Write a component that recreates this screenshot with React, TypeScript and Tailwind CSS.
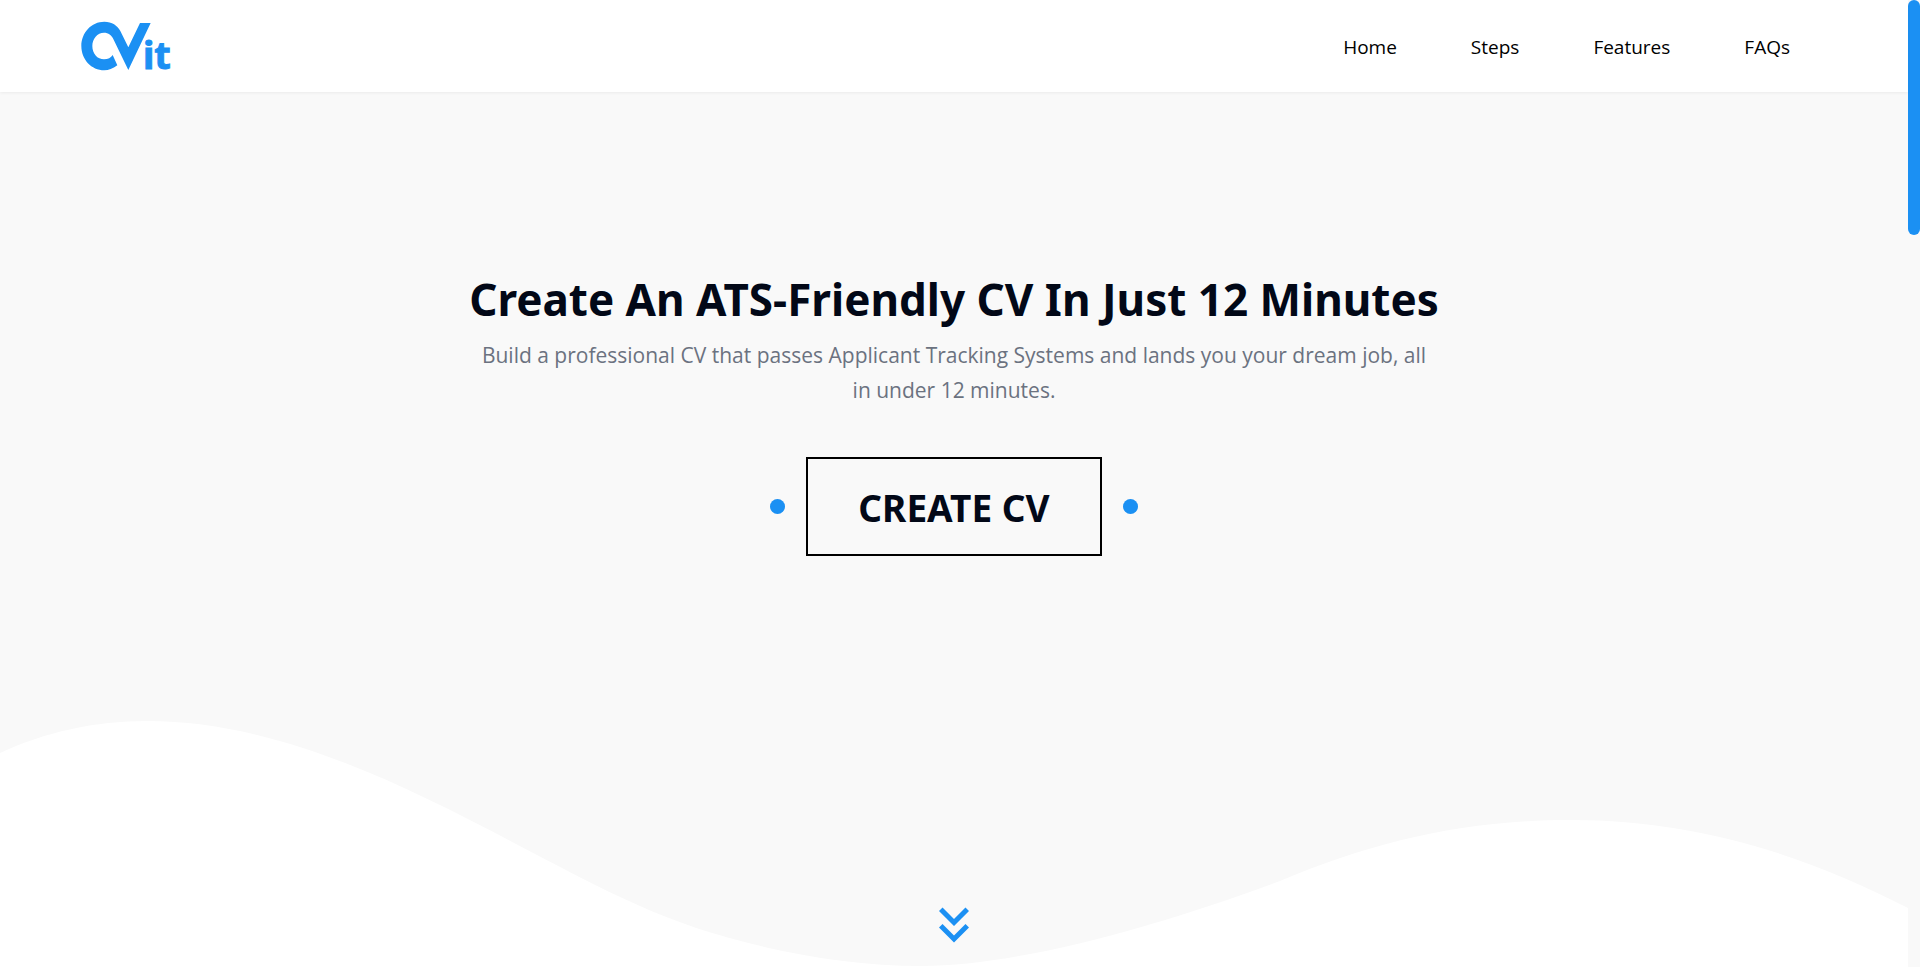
import { MdKeyboardDoubleArrowDown } from "react-icons/md";

const links = [
  { label: "Home", href: "#home" },
  { label: "Steps", href: "#steps" },
  { label: "Features", href: "#features" },
  { label: "FAQs", href: "#faqs" },
];

function Logo() {
  return (
    <svg viewBox="60 0 300 276" className="h-[92px] w-[100px]" fill="#1b90f3" role="img" aria-label="CVit">
      <path d="M172 196C158 206 146 211 133 211C94 211 64 178 64 138C64 98 94 65 133 65C156 65 172 76 181 93L205 142L240 69H272L205 210L161 119C155 105 145 98 132 98C112 98 97 116 97 138C97 161 112 178 132 178C144 178 153 173 158 165Z" />
      <text
        x="249"
        y="206"
        fontSize="114"
        fontWeight="700"
        fontFamily="'Noto Sans', sans-serif"
        stroke="#1b90f3"
        strokeWidth="3"
      >
        it
      </text>
    </svg>
  );
}

function Header() {
  return (
    <header className="z-10 flex h-[92px] items-center justify-between bg-white px-20 shadow-[0_1px_3px_rgba(0,0,0,0.06)]">
      <a href="#home">
        <Logo />
      </a>
      <nav className="flex gap-[74px] pt-0.5 pr-[38px] text-[19px] leading-7 text-black">
        {links.map((link) => (
          <a key={link.label} href={link.href}>
            {link.label}
          </a>
        ))}
      </nav>
    </header>
  );
}

function Wave() {
  return (
    <svg
      viewBox="0 0 1908 247"
      preserveAspectRatio="none"
      className="absolute inset-x-0 bottom-0 h-[247px] w-full"
      fill="#ffffff"
      aria-hidden="true"
    >
      <path d="M0 33C45 12 95 1 147 1C330 1 505 127 640 186C710 218 820 246 922 246C1020 246 1165 204 1280 161C1375 121 1465 100 1572 100C1690 100 1800 132 1908 188V247H0Z" />
    </svg>
  );
}

function Hero() {
  return (
    <main id="home" className="relative flex flex-1 flex-col items-center bg-[#f9f9f9] pt-[175px] pb-3">
      <Wave />
      <div className="relative flex w-full flex-1 flex-col items-center text-center">
        <h1 className="font-['Noto_Sans',sans-serif] text-[44px] leading-[64px] font-bold text-[#020817]">
          Create An ATS-Friendly CV In Just 12 Minutes
        </h1>
        <p className="mt-[7px] max-w-[960px] text-[21px] leading-[35px] text-[#6b7280]">
          Build a professional CV that passes Applicant Tracking Systems and lands you your dream job, all in under 12
          minutes.
        </p>
        <div className="mt-[49px] flex items-center gap-[21px]">
          <span className="size-[15px] rounded-full bg-[#1b90f3]" />
          <button
            type="button"
            className="border-2 border-black px-[50px] pt-[21px] pb-[19px] font-['Noto_Sans',sans-serif] text-[37px] leading-[55px] font-bold text-[#020817]"
          >
            CREATE CV
          </button>
          <span className="size-[15px] rounded-full bg-[#1b90f3]" />
        </div>
        <a href="#steps" aria-label="Scroll to steps" className="mt-auto text-[#1b90f3]">
          <MdKeyboardDoubleArrowDown className="size-[60px]" />
        </a>
      </div>
    </main>
  );
}

export default function App() {
  return (
    <div className="flex min-h-screen bg-[#f9f9f9] font-['Open_Sans','Noto_Sans',sans-serif]">
      <div className="flex min-w-0 flex-1 flex-col">
        <Header />
        <Hero />
      </div>
      <div className="sticky top-0 h-screen w-3 bg-[#f9f9f9]" aria-hidden="true">
        <div className="h-[24.3%] rounded-full bg-[#1b90f3]" />
      </div>
    </div>
  );
}
